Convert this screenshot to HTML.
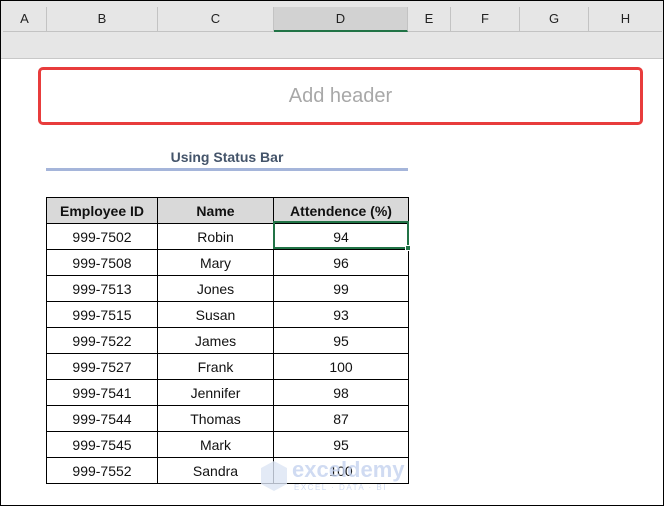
<!DOCTYPE html>
<html><head><meta charset="utf-8"><style>
*{margin:0;padding:0;box-sizing:border-box}
body{width:665px;height:509px;background:#fff;position:relative;overflow:hidden;font-family:"Liberation Sans",sans-serif}
.frame{position:absolute;left:0;top:0;width:664px;height:506px;border:1px solid #000}
.band{position:absolute;left:1px;top:1px;width:662px;height:58px;background:#e6e6e6;border-bottom:1px solid #c8c8c8}
.ch{position:absolute;top:7px;height:25px;border-right:1px solid #c3c3c3;border-bottom:1px solid #c3c3c3;font-size:13px;color:#222;text-align:center;line-height:24px}
.box{position:absolute;left:38px;top:67px;width:605px;height:58px;border:3px solid #e83c3c;border-radius:5px;font-size:20px;color:#a8a8a8;text-align:center;line-height:52px}
.title{position:absolute;left:46px;top:149px;width:362px;text-align:center;font-weight:bold;font-size:14px;color:#44546a}
.rule{position:absolute;left:46px;top:168px;width:362px;height:3px;background:#a5b5da}
table{position:absolute;left:46px;top:197px;border-collapse:collapse}
td{border:1px solid #000;height:26px;text-align:center;font-size:14px;color:#111;padding:0}
tr:first-child td{background:#d9d9d9;font-weight:bold}
.sel{position:absolute;left:273px;top:221px;width:136px;height:28px;border:2px solid #217346}
.h{position:absolute;left:405px;top:245px;width:6px;height:6px;background:#217346;border:1px solid #fff}
.wm{position:absolute;left:262px;top:460px;color:#c5d3ef;opacity:.8}
</style></head><body>
<div class="frame"></div>
<div class="band"></div>
<div class="ch" style="left:3px;width:44px">A</div>
<div class="ch" style="left:47px;width:111px">B</div>
<div class="ch" style="left:158px;width:116px">C</div>
<div class="ch" style="left:274px;width:134px;background:#d2d2d2;border-bottom:2px solid #217346">D</div>
<div class="ch" style="left:408px;width:43px">E</div>
<div class="ch" style="left:451px;width:69px">F</div>
<div class="ch" style="left:520px;width:69px">G</div>
<div class="ch" style="left:589px;width:73px;border-right:none">H</div>
<div class="box">Add header</div>
<div class="title">Using Status Bar</div>
<div class="rule"></div>
<table>
<tr><td style="width:111px">Employee ID</td><td style="width:116px">Name</td><td style="width:135px">Attendence (%)</td></tr>
<tr><td>999-7502</td><td>Robin</td><td>94</td></tr>
<tr><td>999-7508</td><td>Mary</td><td>96</td></tr>
<tr><td>999-7513</td><td>Jones</td><td>99</td></tr>
<tr><td>999-7515</td><td>Susan</td><td>93</td></tr>
<tr><td>999-7522</td><td>James</td><td>95</td></tr>
<tr><td>999-7527</td><td>Frank</td><td>100</td></tr>
<tr><td>999-7541</td><td>Jennifer</td><td>98</td></tr>
<tr><td>999-7544</td><td>Thomas</td><td>87</td></tr>
<tr><td>999-7545</td><td>Mark</td><td>95</td></tr>
<tr><td>999-7552</td><td>Sandra</td><td>100</td></tr>
</table>
<div class="sel"></div><div class="h"></div>
<div class="wm">
<svg width="28" height="32" style="position:absolute;left:-2px;top:0"><polygon points="14,1 27,8 27,24 14,31 1,24 1,8" fill="#dde5f5"/></svg>
<div style="position:absolute;left:30px;top:-3px;font-size:22px;font-weight:bold">exceldemy</div>
<div style="position:absolute;left:32px;top:23px;font-size:8px;letter-spacing:1.5px;white-space:nowrap">EXCEL · DATA · BI</div>
</div>
</body></html>
